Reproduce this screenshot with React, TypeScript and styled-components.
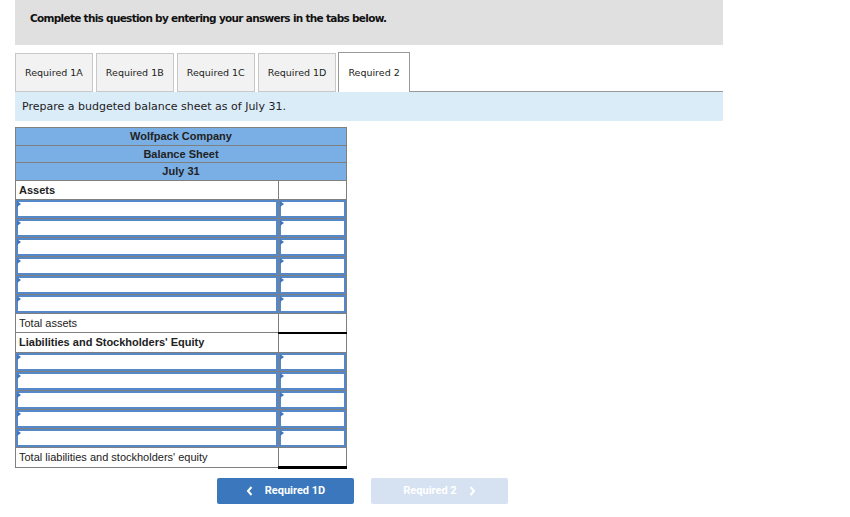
import styled, { createGlobalStyle } from "styled-components";

const GlobalStyle = createGlobalStyle`
  html, body {
    margin: 0;
    padding: 0;
    background: #ffffff;
  }
  body {
    font-family: "DejaVu Sans", Verdana, sans-serif;
  }
`;

const Page = styled.div`
  width: 708px;
  margin-left: 15px;
`;

const Banner = styled.div`
  height: 45px;
  box-sizing: border-box;
  padding: 12px 0 0 15px;
  background: #e0e0e0;
  font-size: 10.5px;
  letter-spacing: -0.7px;
  font-weight: bold;
  color: #111;
`;

const TabBar = styled.div`
  display: flex;
  align-items: flex-end;
  margin-top: 7px;
`;

const Tab = styled.div<{ $active?: boolean }>`
  box-sizing: border-box;
  height: ${(p) => (p.$active ? "40px" : "39px")};
  padding: 0 9px;
  margin-right: ${(p) => (p.$active ? "0" : "3px")};
  margin-left: ${(p) => (p.$active ? "-1px" : "0")};
  display: flex;
  align-items: center;
  font-size: 9.5px;
  color: #222;
  background: ${(p) => (p.$active ? "#ffffff" : "#f2f2f2")};
  border: 1px solid ${(p) => (p.$active ? "#999999" : "#c8c8c8")};
  border-bottom: ${(p) => (p.$active ? "none" : "1px solid #c8c8c8")};
`;

const TabFiller = styled.div`
  flex: 1;
  border-bottom: 1px solid #999999;
`;

const Instruction = styled.div`
  height: 29px;
  box-sizing: border-box;
  padding: 8px 0 0 7px;
  background: #dbecf9;
  font-size: 11px;
  color: #222;
`;

const Sheet = styled.table`
  margin-top: 6px;
  width: 332px;
  border-collapse: collapse;
  font-family: "Liberation Sans", Arial, sans-serif;
  font-size: 11px;
  color: #222;
`;

const HeadCell = styled.td`
  height: 16.5px;
  padding: 0;
  background: #7aafe5;
  border: 1px solid #7f7f7f;
  text-align: center;
  font-weight: bold;
`;

const LabelCell = styled.td<{ $bold?: boolean }>`
  height: 18px;
  padding: 0 0 0 3px;
  border: 1px solid #7f7f7f;
  font-weight: ${(p) => (p.$bold ? "bold" : "normal")};
  white-space: nowrap;
`;

const AmountCell = styled.td<{ $top?: number; $bottom?: number }>`
  width: 67px;
  height: 18px;
  padding: 0;
  border: 1px solid #7f7f7f;
  ${(p) => (p.$top ? `border-top: ${p.$top}px solid #000;` : "")}
  ${(p) => (p.$bottom ? `border-bottom: ${p.$bottom}px solid #000;` : "")}
`;

const InputCell = styled.td`
  height: 18px;
  padding: 0;
  border: 1px solid #7f7f7f;
`;

const Field = styled.div`
  position: relative;
  box-sizing: border-box;
  height: 18px;
  border: 2px solid #5588c9;
  background: #fff;

  &::before {
    content: "";
    position: absolute;
    left: -1px;
    top: -1px;
    border-top: 3px solid transparent;
    border-bottom: 3px solid transparent;
    border-left: 4px solid #3f76c2;
  }
`;

const Nav = styled.div`
  display: flex;
  gap: 17px;
  margin: 9px 0 0 202px;
`;

const NavButton = styled.div<{ $disabled?: boolean }>`
  width: 137px;
  height: 26px;
  border-radius: 2px;
  display: flex;
  align-items: center;
  justify-content: center;
  gap: 12px;
  font-family: Roboto, "Liberation Sans", Arial, sans-serif;
  font-size: 11px;
  font-weight: bold;
  color: #ffffff;
  background: ${(p) => (p.$disabled ? "#d6e2f1" : "#3a77bd")};
`;

const Chevron = ({ dir }: { dir: "left" | "right" }) => (
  <svg width="7" height="10" viewBox="0 0 7 10">
    <path
      d={dir === "left" ? "M5.5 1 L2 5 L5.5 9" : "M1.5 1 L5 5 L1.5 9"}
      fill="none"
      stroke="#ffffff"
      strokeWidth="2"
    />
  </svg>
);

const tabs = ["Required 1A", "Required 1B", "Required 1C", "Required 1D", "Required 2"];

function InputRow() {
  return (
    <tr>
      <InputCell>
        <Field />
      </InputCell>
      <InputCell>
        <Field />
      </InputCell>
    </tr>
  );
}

export default function App() {
  return (
    <>
      <GlobalStyle />
      <Page>
        <Banner>Complete this question by entering your answers in the tabs below.</Banner>
        <TabBar>
          {tabs.map((t, i) => (
            <Tab key={t} $active={i === tabs.length - 1}>
              {t}
            </Tab>
          ))}
          <TabFiller />
        </TabBar>
        <Instruction>Prepare a budgeted balance sheet as of July 31.</Instruction>
        <Sheet>
          <tbody>
            <tr>
              <HeadCell colSpan={2}>Wolfpack Company</HeadCell>
            </tr>
            <tr>
              <HeadCell colSpan={2}>Balance Sheet</HeadCell>
            </tr>
            <tr>
              <HeadCell colSpan={2}>July 31</HeadCell>
            </tr>
            <tr>
              <LabelCell $bold>Assets</LabelCell>
              <AmountCell />
            </tr>
            {[0, 1, 2, 3, 4, 5].map((i) => (
              <InputRow key={`a${i}`} />
            ))}
            <tr>
              <LabelCell>Total assets</LabelCell>
              <AmountCell $top={1} $bottom={2} />
            </tr>
            <tr>
              <LabelCell $bold>Liabilities and Stockholders' Equity</LabelCell>
              <AmountCell />
            </tr>
            {[0, 1, 2, 3, 4].map((i) => (
              <InputRow key={`l${i}`} />
            ))}
            <tr>
              <LabelCell>Total liabilities and stockholders' equity</LabelCell>
              <AmountCell $top={1} $bottom={3} />
            </tr>
          </tbody>
        </Sheet>
        <Nav>
          <NavButton>
            <Chevron dir="left" />
            Required 1D
          </NavButton>
          <NavButton $disabled>
            Required 2
            <Chevron dir="right" />
          </NavButton>
        </Nav>
      </Page>
    </>
  );
}
